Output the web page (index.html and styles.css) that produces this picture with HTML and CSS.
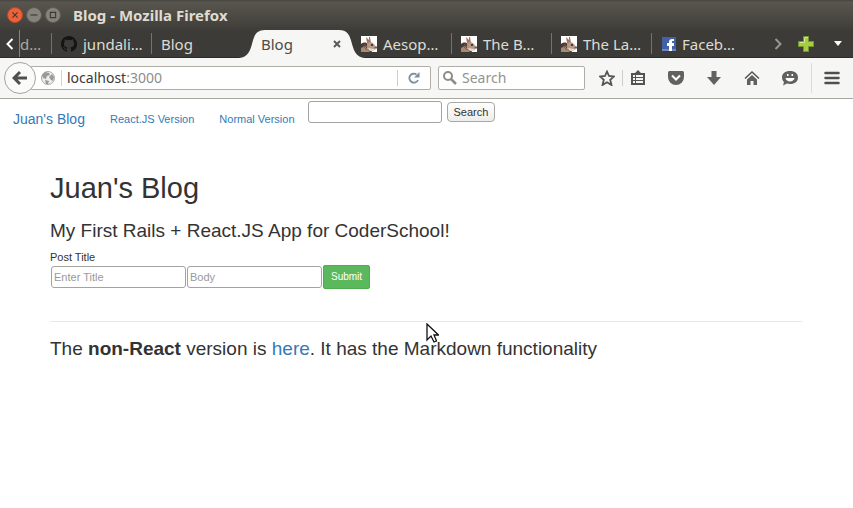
FILE: index.html
```html
<!DOCTYPE html>
<html lang="en">
<head>
<meta charset="utf-8">
<title>Blog</title>
<link rel="stylesheet" href="styles.css">
</head>
<body>
<svg class="defs" aria-hidden="true">
  <symbol id="rabbit" viewBox="0 0 16 16">
    <rect width="16" height="16" fill="#fff"/>
    <path d="M0 8C2 6 5 6 7 8L11 16H0z" fill="#4d3b32"/>
    <path d="M0 12L4 10 9 16H0z" fill="#a88974"/>
    <path d="M5 1L8 4 9 8 6 7zM8 1L9 1 10 7 8 6z" fill="#a9745b"/>
    <path d="M6 8C8 5 11 6 13 8L15 11 14 14 9 15 6 13z" fill="#b39a88"/>
    <path d="M7 12L13 13 14 14 9 15z" fill="#e8ddd4"/>
    <circle cx="11" cy="9" r="1" fill="#30211b"/>
    <path d="M14 11h2v1h-2zM3 8l3 3M2 10l4 4" fill="#765b50" stroke="#765b50"/>
  </symbol>
</svg>
<header class="browser">
  <div class="titlebar">
    <button class="win close" aria-label="Close"><svg viewBox="0 0 16 16"><path d="M5 5l6 6m0-6l-6 6"/></svg></button>
    <button class="win" aria-label="Minimize"><svg viewBox="0 0 16 16"><path d="M4 8h8"/></svg></button>
    <button class="win" aria-label="Maximize"><svg viewBox="0 0 16 16"><path d="M5 5h6v6H5z"/></svg></button>
    <span class="wintitle">Blog - Mozilla Firefox</span>
  </div>
  <nav class="tabs" aria-label="Tabs">
    <button class="scroll" aria-label="Scroll left"><svg width="8" height="14" viewBox="0 0 8 14"><path d="M6.500 2L1.500 7l5 5" fill="none" stroke="#fff" stroke-width="2"/></svg></button>
    <a class="tab clipped" href="#">d…</a>
    <a class="tab" href="#"><svg width="16" height="16" viewBox="0 0 16 16"><path fill="#141414" d="M8 0C3.580 0 0 3.580 0 8c0 3.540 2.290 6.530 5.470 7.590.4.070.55-.17.55-.38v-1.490c-2.010.37-2.530-.49-2.690-.94-.09-.23-.48-.94-.82-1.130-.28-.15-.68-.52-.01-.53.63-.01 1.080.58 1.230.82.72 1.210 1.870.87 2.330.66.07-.52.28-.87.51-1.070-1.780-.2-3.640-.89-3.640-3.950 0-.87.31-1.590.82-2.150-.08-.2-.36-1.020.08-2.120 0 0 .67-.21 2.200.82a7.600 7.600 0 0 1 4 0c1.530-1.040 2.200-.82 2.200-.82.44 1.100.16 1.920.08 2.120.51.560.82 1.270.82 2.150 0 3.070-1.870 3.750-3.650 3.950.29.250.54.730.54 1.480v2.200c0 .21.15.46.55.38A8 8 0 0 0 8 0z"/></svg><span>jundali…</span></a>
    <a class="tab plain" href="#">Blog</a>
    <div class="tab active">
      <svg class="shape" viewBox="0 0 126 28" preserveAspectRatio="none"><path fill="#f6f6f4" d="M0 28C9 27 11 21 13 14C15 6 17 0 26 0H100C109 0 111 6 113 14C115 21 117 27 126 28z"/></svg>
      <a href="#">Blog</a>
      <button class="tabclose" aria-label="Close tab"><svg width="8" height="8" viewBox="0 0 8 8"><path d="M1 1l6 6m0-6L1 7" stroke="#5c5b58" stroke-width="2"/></svg></button>
    </div>
    <a class="tab" href="#"><svg width="16" height="16"><use href="#rabbit"/></svg><span>Aesop…</span></a>
    <a class="tab" href="#"><svg width="16" height="16"><use href="#rabbit"/></svg><span>The B…</span></a>
    <a class="tab" href="#"><svg width="16" height="16"><use href="#rabbit"/></svg><span>The La…</span></a>
    <a class="tab last" href="#"><svg width="14" height="14" viewBox="0 0 14 14"><rect width="14" height="14" fill="#4162a6"/><path d="M0 12h14v2H0z" fill="#6e88bd"/><path d="M7 14V9H5V6h2V5c0-2 1-3 3-3h2v2h-1c-1 0-1 0-1 1v1h2v3h-2v5z" fill="#fff"/></svg><span>Faceb…</span></a>
    <div class="tabtools">
      <button aria-label="Scroll right"><svg width="8" height="14" viewBox="0 0 8 14"><path d="M1.500 2l5 5-5 5" fill="none" stroke="#989690" stroke-width="2"/></svg></button>
      <button aria-label="New tab"><svg width="16" height="16" viewBox="0 0 16 16"><path d="M5.500.5h5v5h5v5h-5v5h-5v-5h-5v-5h5z" fill="#a9cb45" stroke="#749a2c"/><path d="M6.500 2v4.500H2M7 1.500h3" fill="none" stroke="#d3e98d"/></svg></button>
      <button aria-label="List tabs"><svg width="8" height="5" viewBox="0 0 8 5"><path d="M0 0h8L4 5z" fill="#fff"/></svg></button>
    </div>
  </nav>
  <div class="toolbar">
    <button class="back" aria-label="Back"><svg width="16" height="16" viewBox="0 0 16 16"><path d="M8 2L2 8l6 6M2.500 8H15" fill="none" stroke="#504f4c" stroke-width="3"/></svg></button>
    <div class="urlbar">
      <svg width="14" height="14" viewBox="0 0 14 14"><circle cx="7" cy="7" r="6.500" fill="#ededeb" stroke="#a8a8a4"/><path d="M1 4l3-3 4 1 1 2-3 1-1 3-3-1zM8 6l3-3 2 3-1 4-2-1zM4 9l4 1-1 3H5z" fill="#999a96"/></svg>
      <div class="url" role="textbox" aria-label="Address" contenteditable="true" spellcheck="false">localhost<span>:3000</span></div>
      <button class="reload" aria-label="Reload"><svg width="12" height="12" viewBox="0 0 12 12"><path d="M10 8A4.500 4.500 0 1 1 8.500 2.500" fill="none" stroke="#7890a0" stroke-width="1.800"/><path d="M11.500 0v5.500H6z" fill="#7890a0"/></svg></button>
    </div>
    <div class="searchbar">
      <svg width="14" height="14" viewBox="0 0 14 14"><circle cx="5" cy="5" r="4" fill="none" stroke="#8c8c89" stroke-width="2"/><path d="M8 8l5 5" stroke="#8c8c89" stroke-width="2.500"/></svg>
      <input type="search" placeholder="Search" aria-label="Web search">
    </div>
    <div class="icons">
      <button aria-label="Bookmark"><svg viewBox="0 0 16 16"><path d="M8 1.500l2 4.500 5 .5-3.800 3.300L12.500 15 8 12.200 3.500 15l1.300-5.200L1 6.500 6 6z" fill="none" stroke="#555451" stroke-width="1.800"/></svg></button>
      <button class="list" aria-label="Bookmarks list"><svg viewBox="0 0 16 16"><path d="M1 3h4l3-3 3 3h4v12H1z" fill="#555451"/><path d="M3 5h2v2H3zm3 0h7v2H6zM3 8h2v2H3zm3 0h7v2H6zm-3 3h2v2H3zm3 0h7v2H6z" fill="#f6f6f4"/></svg></button>
      <button aria-label="Pocket"><svg viewBox="0 0 16 16"><path d="M1.500 1h13Q16 1 16 2.500V7A8 8 0 0 1 0 7V2.500Q0 1 1.500 1z" fill="#62615e"/><path d="M4 5.500l4 4 4-4" fill="none" stroke="#fff" stroke-width="2"/></svg></button>
      <button aria-label="Downloads"><svg viewBox="0 0 16 16"><path d="M5.500 1h5v6H15l-7 8-7-8h4.500z" fill="#62615e"/></svg></button>
      <button aria-label="Home"><svg viewBox="0 0 16 16"><path d="M1 8.500l7-6.500 7 6.500" fill="none" stroke="#555451" stroke-width="1.500"/><path d="M3 9.500l5-4.500 5 4.500V15H9.500v-4h-3v4H3z" fill="#62615e"/></svg></button>
      <button aria-label="Hello"><svg viewBox="0 0 16 16"><path d="M8 1C13 1 16 3.500 16 7.500S13 14 8 14l-3-.5L1 15.500l1-3.500C1 11 0 9.500 0 7.500 0 3.500 3 1 8 1z" fill="#62615e"/><path d="M5 4h1.500v2H5zm4.500 0H11v2H9.500zM3.500 8h9c-.5 4.500-8.500 4.500-9 0z" fill="#fff"/></svg></button>
    </div>
    <button class="menu" aria-label="Menu"><svg width="16" height="14" viewBox="0 0 16 14"><path d="M1.500 2h13m-13 5h13m-13 5h13" stroke="#504f4c" stroke-width="2.500" stroke-linecap="round"/></svg></button>
  </div>
</header>
<nav class="sitenav" aria-label="Site">
  <a class="brand" href="#">Juan's Blog</a>
  <a href="#">React.JS Version</a>
  <a href="#">Normal Version</a>
  <form class="find">
    <input type="text" aria-label="Search posts">
    <button type="button">Search</button>
  </form>
</nav>
<main>
  <h1>Juan's Blog</h1>
  <h2>My First Rails + React.JS App for CoderSchool!</h2>
  <form class="post">
    <label for="title">Post Title</label>
    <div class="fields">
      <input id="title" type="text" placeholder="Enter Title">
      <input type="text" placeholder="Body" aria-label="Body">
      <button type="button">Submit</button>
    </div>
  </form>
  <hr>
  <p>The <strong>non-React</strong> version is <a href="#">here</a>. It has the Markdown functionality</p>
</main>
<svg class="pointer" width="13" height="20" viewBox="0 0 13 20" aria-hidden="true"><path d="M1 1v16l4-4 3 6 2.500-1-2.500-6h4.500z" fill="#fff" stroke="#111" stroke-width="1.300"/></svg>
</body>
</html>
```
FILE: styles.css
```css
* { box-sizing: border-box; }
body {
  margin: 0;
  background: #fff;
  color: #333;
  font-family: "Liberation Sans", Arial, sans-serif;
  font-size: 11px;
  line-height: 16px;
}
a { color: #337ab7; text-decoration: none; }
button { padding: 0; border: 0; background: none; font: inherit; }
svg { display: block; flex: none; }
.defs { position: absolute; width: 0; height: 0; }

/* Browser window */
.browser { font-family: "Noto Sans", "Open Sans", sans-serif; font-size: 14px; line-height: 20px; }
.titlebar {
  display: flex;
  align-items: center;
  gap: 3px;
  height: 30px;
  padding: 0 7px;
  background: linear-gradient(#454440 0, #59564e 2px, #3e3d39 100%);
}
.win { width: 16px; height: 16px; border-radius: 50%; background: #85837b; border: 1px solid #5b5a54; }
.win svg { width: 14px; height: 14px; fill: none; stroke: #3b3a36; stroke-width: 1.3; }
.win.close { background: #ee6239; border-color: #b8482a; }
.wintitle { margin-left: 9px; color: #dfdbd2; font-size: 15px; font-weight: 700; }
.tabs { display: flex; height: 28px; background: #3c3b37; border-bottom: 1px solid #2c2b28; font-size: 15px; }
.scroll { display: flex; justify-content: center; align-items: center; width: 20px; border-right: 1px solid #85847f; }
.tab {
  position: relative;
  display: flex;
  align-items: center;
  gap: 6px;
  flex: 0 0 100px;
  padding: 0 9px;
  color: #dfdbd2;
  white-space: nowrap;
}
.tab::after { content: ""; position: absolute; right: 0; top: 3px; bottom: 3px; width: 1px; background: #74736e; }
.tab.clipped { flex-basis: 32px; padding: 0; color: #aaa8a0; }
.tab.plain::after, .tab.active::after, .tab.last::after { content: none; }
.tab.active { justify-content: space-between; padding-right: 10px; }
.tab.active a { position: relative; color: #4c4b48; }
.shape { position: absolute; left: -13px; top: 0; width: 126px; height: 28px; }
.tabclose { position: relative; padding: 1px; }
.tab.last { padding-left: 10px; }
.tabtools { display: flex; align-items: center; justify-content: flex-end; gap: 16px; flex: 1; padding-right: 11px; }
.tabtools button:last-child { padding-left: 4px; }
.toolbar {
  display: flex;
  align-items: center;
  height: 41px;
  padding: 0 13px 0 4px;
  background: #f6f6f4;
  border-bottom: 1px solid #a9a7a1;
}
.back {
  position: relative;
  display: flex;
  align-items: center;
  justify-content: center;
  width: 32px;
  height: 32px;
  border: 1px solid #a5a39e;
  border-radius: 50%;
  background: #fafaf9;
}
.urlbar {
  display: flex;
  align-items: center;
  flex: 1;
  height: 24px;
  margin-left: -6px;
  padding-left: 10px;
  border: 1px solid #b0ada7;
  border-radius: 2px;
  background: #fff;
}
.url { flex: 1; margin-left: 6px; padding-left: 5px; border-left: 1px solid #d7d5d1; line-height: 16px; color: #3b3a38; }
.url span { color: #8e8e8b; }
.reload { width: 33px; height: 16px; padding-left: 10px; border-left: 1px solid #d0ceca; }
.searchbar {
  display: flex;
  align-items: center;
  gap: 5px;
  width: 147px;
  height: 24px;
  margin-left: 7px;
  padding-left: 4px;
  border: 1px solid #b0ada7;
  border-radius: 2px;
  background: #fff;
}
.searchbar input { flex: 1; min-width: 0; padding: 0; border: 0; background: none; font: inherit; line-height: 20px; }
.searchbar input::placeholder { color: #92928f; }
.icons { display: flex; align-items: center; gap: 22px; margin-left: 14px; }
.icons svg { width: 16px; height: 16px; }
.icons .list { margin-left: -15px; padding-left: 7px; border-left: 1px solid #d0ceca; }
.menu { margin-left: 13px; padding: 8px 0 8px 12px; border-left: 1px solid #dddbd7; }

/* Site */
.sitenav { display: flex; align-items: flex-start; padding: 2px 13px 0; }
.sitenav > a { padding-top: 10px; margin-right: 25px; }
.sitenav > .brand { font-size: 14px; }
.find { display: flex; gap: 5px; margin-left: -12px; }
input { font-family: inherit; font-size: 11px; color: #333; }
.find input, .fields input { width: 134px; height: 22px; padding: 0 2px; border: 1px solid #a5a3a0; border-radius: 3px; background: #fff; }
.find button {
  height: 20px;
  margin-top: 1px;
  padding: 0 6px;
  border: 1px solid #aaa8a5;
  border-radius: 4px;
  background: linear-gradient(#fff, #ededeb);
  color: #333;
}
main { padding: 0 51px 0 50px; }
h1, h2, p { margin: 0; font-weight: 400; }
h1 { margin-top: 44px; font-size: 29px; line-height: 34px; }
h2 { margin-top: 15px; font-size: 19px; line-height: 22px; }
.post label { display: block; margin-top: 7px; }
.fields { display: flex; align-items: center; gap: 1px; padding-left: 1px; }
.fields input { width: 135px; }
.fields input::placeholder { color: #999; }
.fields button {
  height: 24px;
  padding: 0 7px;
  border: 1px solid #4cae4c;
  border-radius: 2px;
  background: #5cb85c;
  color: #fff;
  font-size: 10px;
}
hr { margin: 32px 0 16px; border: 0; border-top: 1px solid #e8e8e8; }
p { font-size: 19px; line-height: 22px; }
.pointer { position: absolute; left: 426px; top: 323px; }
```
